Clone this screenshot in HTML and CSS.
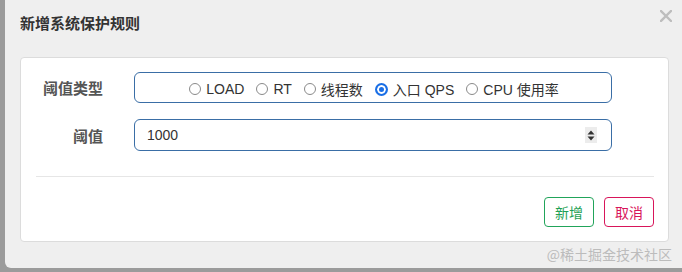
FILE: index.html
```html
<!DOCTYPE html>
<html lang="zh">
<head>
<meta charset="utf-8">
<title>新增系统保护规则</title>
<link rel="stylesheet" href="styles.css">
</head>
<body>
<div class="dialog">
  <div class="title">新增系统保护规则</div>
  <svg class="close" width="12" height="12" viewBox="0 0 12 12"><path d="M1 1L11 11M11 1L1 11" stroke="#bdbdbd" stroke-width="2.4" stroke-linecap="square"/></svg>
  <div class="panel">
    <div class="row">
      <div class="label">阈值类型</div>
      <div class="box radios">
        <span class="opt"><span class="radio"></span>LOAD</span>
        <span class="opt"><span class="radio"></span>RT</span>
        <span class="opt"><span class="radio"></span>线程数</span>
        <span class="opt"><span class="radio checked"></span>入口 QPS</span>
        <span class="opt"><span class="radio"></span>CPU 使用率</span>
      </div>
    </div>
    <div class="row">
      <div class="label">阈值</div>
      <div class="box input">
        <span class="value">1000</span>
        <span class="spin"><svg width="10" height="13" viewBox="0 0 10 13"><path d="M5 1.5L8.5 5.5H1.5Z M5 11.5L8.5 7.5H1.5Z" fill="#333"/></svg></span>
      </div>
    </div>
    <div class="divider"></div>
    <div class="actions">
      <button class="btn ok">新增</button>
      <button class="btn cancel">取消</button>
    </div>
  </div>
  <div class="watermark">@稀土掘金技术社区</div>
</div>
</body>
</html>
```
FILE: styles.css
```css
html, body {
  margin: 0;
  padding: 0;
}
body {
  width: 682px;
  height: 272px;
  overflow: hidden;
  background: #9b9b9b;
  font-family: "Liberation Sans", "Noto Sans CJK SC", sans-serif;
  color: #333;
}
.dialog {
  position: relative;
  margin-left: 5px;
  height: 268px;
  background: #efefef;
  border-bottom-left-radius: 6px;
  padding-left: 15px;
  box-sizing: border-box;
}
.title {
  padding-top: 14px;
  height: 57px;
  box-sizing: border-box;
  font-family: "Noto Sans CJK SC", sans-serif;
  font-weight: bold;
  font-size: 15px;
  line-height: 18px;
  color: #333;
}
.close {
  position: absolute;
  left: 655px;
  top: 10px;
}
.panel {
  width: 649px;
  height: 185px;
  box-sizing: border-box;
  background: #fff;
  border: 1px solid #dcdcdc;
  border-radius: 4px;
  padding: 14px 14px 0 15px;
}
.row {
  display: flex;
  align-items: center;
  margin-bottom: 16px;
}
.label {
  width: 67px;
  margin-right: 31px;
  text-align: right;
  font-family: "Noto Sans CJK SC", sans-serif;
  font-weight: bold;
  font-size: 15px;
  color: #555;
}
.box {
  width: 478px;
  box-sizing: border-box;
  border: 1px solid #3a6ea6;
  border-radius: 6px;
  display: flex;
  align-items: center;
  font-size: 14px;
  color: #333;
}
.radios {
  height: 31px;
  justify-content: center;
  gap: 12px;
  padding-left: 2px;
  padding-top: 3px;
}
.opt {
  display: flex;
  align-items: center;
  gap: 5px;
}
.radio {
  width: 12px;
  height: 12px;
  box-sizing: border-box;
  border: 1px solid #8a8a8a;
  border-radius: 50%;
  background: #fff;
}
.radio.checked {
  width: 13px;
  height: 13px;
  border: 2px solid #1a6fe6;
  background: #1a6fe6;
  box-shadow: inset 0 0 0 2px #fff;
}
.input {
  height: 32px;
  padding: 0 14px 0 12px;
  justify-content: space-between;
}
.spin {
  width: 12px;
  height: 16px;
  background: #ececec;
  display: flex;
  align-items: center;
  justify-content: center;
}
.spin svg {
  display: block;
}
.divider {
  margin-top: 25px;
  width: 618px;
  height: 1px;
  background: #e6e6e6;
}
.actions {
  width: 618px;
  display: flex;
  justify-content: flex-end;
  gap: 10px;
  margin-top: 20px;
}
.btn {
  width: 50px;
  height: 30px;
  box-sizing: border-box;
  background: #fff;
  border-radius: 4px;
  font-family: "Noto Sans CJK SC", sans-serif;
  font-size: 14px;
  padding: 0;
}
.ok {
  border: 1px solid #21a45a;
  color: #1ea155;
}
.cancel {
  border: 1px solid #d8155a;
  color: #d8155a;
}
.watermark {
  position: absolute;
  right: 10px;
  top: 245px;
  font-family: "Noto Sans CJK SC", sans-serif;
  font-size: 14px;
  line-height: 18px;
  color: #bcbcbc;
}
```
